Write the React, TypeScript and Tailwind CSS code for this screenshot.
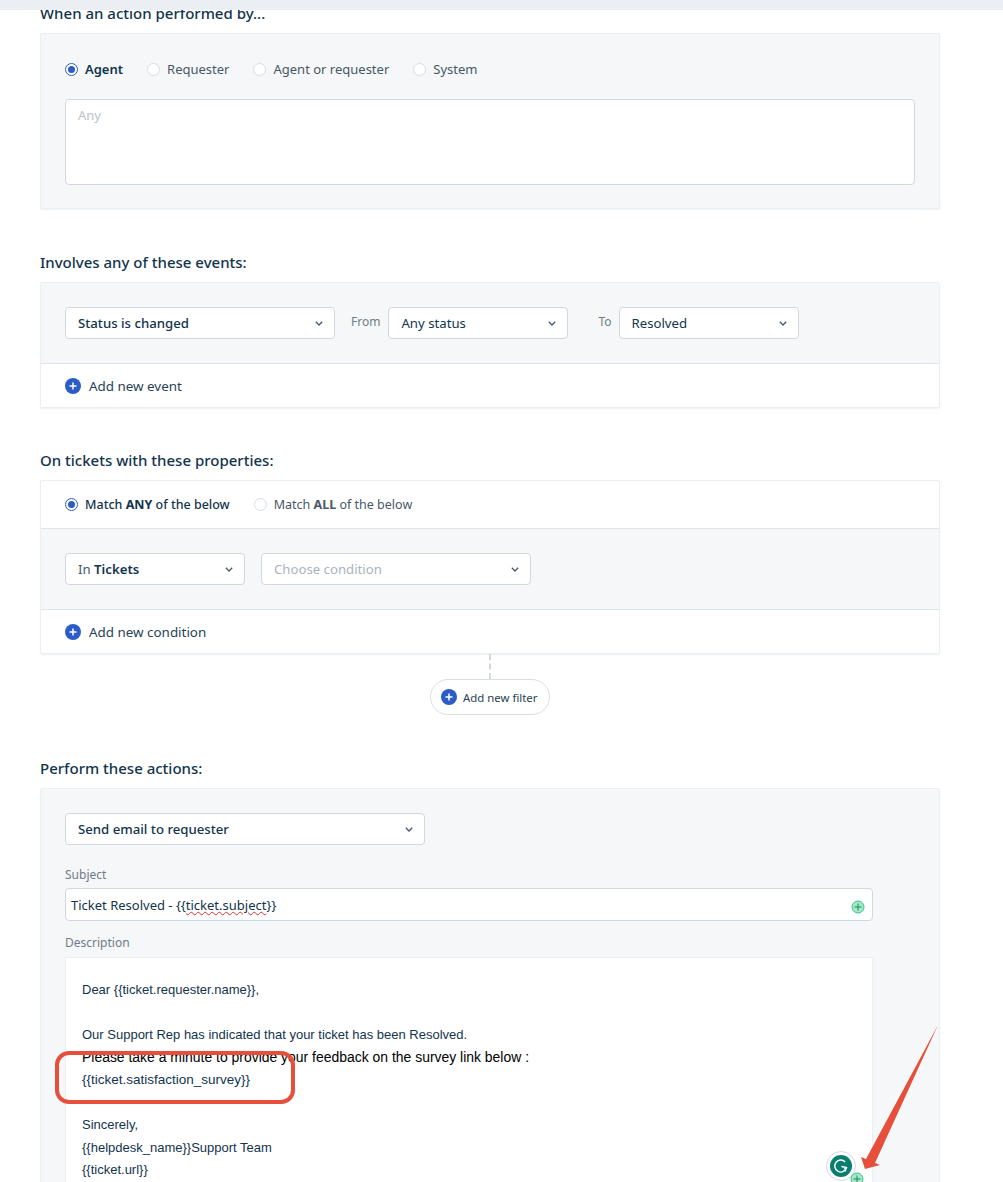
const font = "font-['Noto_Sans',sans-serif]"

const Chevron = () => (
    <svg width="8" height="5" viewBox="0 0 8 5" fill="none" stroke="#475867" strokeWidth="1.3" className="shrink-0">
        <path d="M0.8 0.8 L4 4 L7.2 0.8" />
    </svg>
)

const Radio = ({ checked, label }: { checked?: boolean; label: React.ReactNode }) => (
    <div className="flex items-center gap-[7px]">
        {checked ? (
            <span className="flex w-[13px] h-[13px] rounded-full border border-[#2c5cc5] bg-white items-center justify-center">
                <span className="w-[7px] h-[7px] rounded-full bg-[#2c5cc5]" />
            </span>
        ) : (
            <span className="w-[13px] h-[13px] rounded-full border border-[#d5dde5] bg-white" />
        )}
        <span className={`pt-[2px] ${checked ? 'text-[#12344d]' : 'text-[#475867]'}`}>{label}</span>
    </div>
)

const Select = ({ className, children }: { className: string; children: React.ReactNode }) => (
    <div className={`flex items-center justify-between h-[32px] pl-[12px] pr-[11px] bg-white border border-[#cfd7df] rounded-[4px] text-[13.2px] text-[#12344d] ${className}`}>
        <span className="pt-px">{children}</span>
        <Chevron />
    </div>
)

const AddRow = ({ label }: { label: string }) => (
    <div className="flex items-center gap-[8px] h-[43px] pt-px pl-[24px] text-[13.4px] text-[#283f53]">
        <PlusIcon />
        {label}
    </div>
)

const PlusIcon = () => (
    <svg width="16" height="16" viewBox="0 0 16 16" className="shrink-0">
        <circle cx="8" cy="8" r="8" fill="#2c5cc5" />
        <path d="M8 4.5 V11.5 M4.5 8 H11.5" stroke="#fff" strokeWidth="1.5" />
    </svg>
)

const GreenPlus = ({ className }: { className: string }) => (
    <svg width="14" height="14" viewBox="0 0 14 14" className={className}>
        <circle cx="7" cy="7" r="6" fill="#a5e8c8" stroke="#2fc48d" strokeWidth="1" />
        <path d="M7 3.5 V10.5 M3.5 7 H10.5" stroke="#1b8a63" strokeWidth="1" />
    </svg>
)

const Heading = ({ children }: { children: string }) => (
    <h2 className="ml-[40px] text-[15px] leading-[20px] font-medium text-[#12344d]">{children}</h2>
)

const Card = ({ className, children }: { className: string; children: React.ReactNode }) => (
    <div className={`ml-[40px] w-[900px] border border-[#ebeff3] rounded-[2px] shadow-[0_1px_2px_rgba(18,52,77,0.07)] ${className}`}>
        {children}
    </div>
)

export default function App() {
    return (
        <div className={`relative h-[1182px] overflow-hidden bg-white ${font}`}>
            <div className="relative z-10 h-[10px] bg-[#ebeef2]" />
            <div className="-mt-[7px]">
                <Heading>When an action performed by...</Heading>
            </div>

            <Card className="mt-[10px] h-[176px] bg-[#f5f7f9] px-[24px] pt-[24px]">
                <div className="flex items-center gap-[24px] h-[22px] text-[13px]">
                    <div className="font-semibold"><Radio checked label="Agent" /></div>
                    <Radio label="Requester" />
                    <Radio label="Agent or requester" />
                    <Radio label="System" />
                </div>
                <div className="mt-[19px] h-[86px] bg-white border border-[#cfd7df] rounded-[4px] px-[12px] py-[6px] text-[13px] text-[#b8c3cc]">
                    Any
                </div>
            </Card>

            <div className="mt-[43px]"><Heading>Involves any of these events:</Heading></div>
            <Card className="mt-[10px] bg-white">
                <div className="flex items-center h-[81px] bg-[#f5f7f9] border-b border-[#dfe4ea] pl-[24px]">
                    <Select className="w-[270px] font-medium">Status is changed</Select>
                    <span className="ml-[16px] mr-[7px] -mt-[3px] text-[12px] text-[#6f7c87]">From</span>
                    <Select className="w-[180px] ml-px">Any status</Select>
                    <span className="ml-[30px] mr-[7px] -mt-[3px] text-[12px] text-[#6f7c87]">To</span>
                    <Select className="w-[180px]">Resolved</Select>
                </div>
                <AddRow label="Add new event" />
            </Card>

            <div className="mt-[42px]"><Heading>On tickets with these properties:</Heading></div>
            <Card className="mt-[10px] bg-white">
                <div className="flex items-center gap-[24px] h-[48px] pl-[24px] border-b border-[#dfe4ea] text-[12.5px]">
                    <Radio checked label={<><span className="font-medium">Match </span><b>ANY</b><span className="font-medium"> of the below</span></>} />
                    <Radio label={<>Match <b>ALL</b> of the below</>} />
                </div>
                <div className="flex items-center gap-[16px] h-[81px] pl-[24px] bg-[#f5f7f9] border-b border-[#dfe4ea]">
                    <Select className="w-[180px]"><span className="text-[#475867]">In </span><span className="font-semibold">Tickets</span></Select>
                    <Select className="w-[270px]"><span className="text-[#a9b4bd]">Choose condition</span></Select>
                </div>
                <AddRow label="Add new condition" />
            </Card>

            <div className="ml-[489px] w-0 h-[25px] border-l-2 border-dashed border-[#d5d9dd]" />
            <div className="ml-[430px] w-[120px] h-[36px] flex items-center gap-[6px] pl-[10px] bg-white border border-[#d9dfe5] rounded-[18px] text-[11.4px] text-[#283f53]">
                <PlusIcon />
                <span className="pt-px">Add new filter</span>
            </div>

            <div className="mt-[43px]"><Heading>Perform these actions:</Heading></div>
            <Card className="mt-[10px] h-[500px] bg-[#f5f7f9] pl-[24px] pt-[24px]">
                <Select className="w-[360px] font-medium">Send email to requester</Select>
                <div className="mt-[21px] text-[12px] leading-[18px] text-[#6f7c87]">Subject</div>
                <div className="relative mt-[4px] w-[808px] h-[33px] flex items-center pl-[5px] pt-[3px] bg-white border border-[#cfd7df] rounded-[4px] text-[13px] text-[#12344d]">
                    <span>Ticket Resolved - {'{{'}<span className="underline decoration-wavy decoration-[#d9302c] decoration-1">ticket.subject</span>{'}}'}</span>
                    <GreenPlus className="absolute right-[7px] top-[11px]" />
                </div>
                <div className="mt-[13px] text-[12px] leading-[18px] text-[#6f7c87]">Description</div>
                <div className="mt-[5px] w-[808px] h-[300px] bg-white border border-[#ebeff3] pl-[16px] pt-[21px] font-['Liberation_Sans',sans-serif] text-[13px] leading-[22.5px] text-[#12344d]">
                    <p>Dear {'{{ticket.requester.name}}'},</p>
                    <p className="mt-[22px]">Our Support Rep has indicated that your ticket has been Resolved.</p>
                    <p className="text-[13.95px] text-black">Please take a minute to provide your feedback on the survey link below :</p>
                    <p className="text-[13.5px] text-[#12344d]">{'{{ticket.satisfaction_survey}}'}</p>
                    <p className="mt-[22.5px]">Sincerely,</p>
                    <p className="pt-px -mb-px">{'{{helpdesk_name}}'}Support Team</p>
                    <p>{'{{ticket.url}}'}</p>
                </div>
            </Card>

            {/* annotations on top of the screenshot */}
            <div className="absolute left-[55px] top-[1051px] w-[240px] h-[53px] border-4 border-[#e54f3c] rounded-[14px]" />
            <svg className="absolute left-[855px] top-[1022px]" width="90" height="160" viewBox="0 0 90 160">
                <path d="M83 3 L20 141 L25 143 L10 147 L6 135 L11 137 Z" fill="#e54f3c" />
            </svg>
            <div className="absolute left-[826px] top-[1151px] w-[30px] h-[30px] rounded-full bg-white border border-[#d5d9e5] flex items-center justify-center">
                <svg width="22" height="22" viewBox="0 0 22 22">
                    <circle cx="11" cy="11" r="11" fill="#0a7e6e" />
                    <path d="M15.2 7 A6 6 0 1 0 16.6 12.5 L11.5 11.5 M14.6 12.5 L15.6 16.5" fill="none" stroke="#fff" strokeWidth="1.4" />
                </svg>
            </div>
            <GreenPlus className="absolute left-[850px] top-[1172px]" />
        </div>
    )
}
